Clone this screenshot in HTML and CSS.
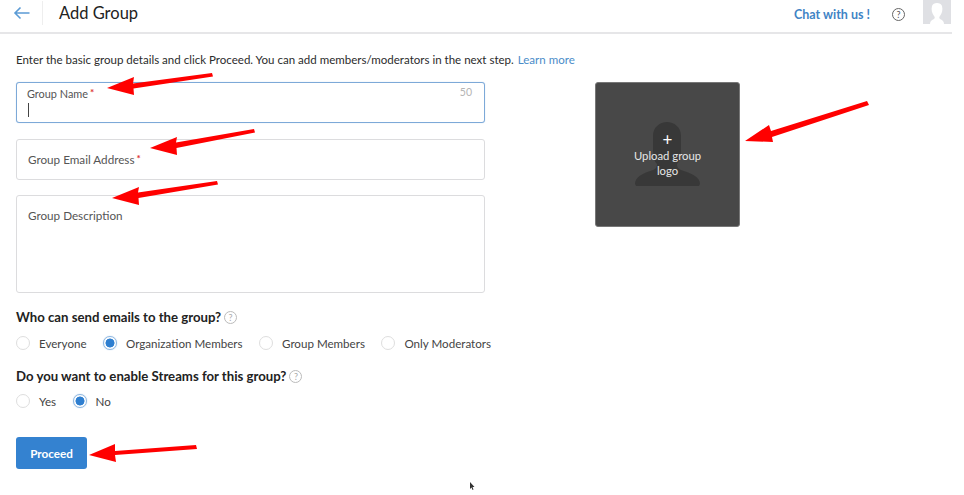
FILE: index.html
```html
<!DOCTYPE html>
<html lang="en">
<head>
<meta charset="utf-8">
<title>Add Group</title>
<link rel="stylesheet" href="styles.css">
</head>
<body>
<div class="page">
  <header class="topbar">
    <svg class="back" width="18" height="14" viewBox="0 0 18 14"><path d="M16.500 7H2M7.500 1.500 2 7l5.500 5.500" fill="none" stroke="#5b9bd5" stroke-width="1.600"/></svg>
    <span class="divider"></span>
    <h1 class="title">Add Group</h1>
    <a class="chat">Chat with us !</a>
    <span class="help-top">?</span>
    <svg class="avatar" width="28" height="24" viewBox="0 0 28 24"><rect width="28" height="24" fill="#dfe0e4"/><path d="M7 24c0-3 2-4 4-5 1-1 1-2 0-3-2-3-3-6-2-10 1-4 9-4 10 0 1 4 0 7-2 10-1 1-1 2 0 3 2 1 4 2 4 5z" fill="#fff"/></svg>
  </header>
  <p class="intro">Enter the basic group details and click Proceed. You can add members/moderators in the next step. <a class="learn">Learn more</a></p>
  <div class="content">
    <form class="form">
      <div class="field field-name focused">
        <label class="label">Group Name<span class="req">*</span></label>
        <span class="count">50</span>
        <span class="caret"></span>
      </div>
      <div class="field field-email">
        <label class="label">Group Email Address<span class="req">*</span></label>
      </div>
      <div class="field field-desc">
        <label class="label">Group Description</label>
      </div>
      <h2 class="question q1">Who can send emails to the group?<span class="qmark">?</span></h2>
      <div class="radios r1">
        <span class="radio"><i class="dot"></i>Everyone</span>
        <span class="radio"><i class="dot on"></i>Organization Members</span>
        <span class="radio"><i class="dot"></i>Group Members</span>
        <span class="radio"><i class="dot"></i>Only Moderators</span>
      </div>
      <h2 class="question q2">Do you want to enable Streams for this group?<span class="qmark">?</span></h2>
      <div class="radios r2">
        <span class="radio"><i class="dot"></i>Yes</span>
        <span class="radio"><i class="dot on"></i>No</span>
      </div>
      <button class="proceed" type="button">Proceed</button>
    </form>
    <div class="logo-box">
      <svg class="silhouette" width="66" height="66" viewBox="0 0 66 66"><path d="M0 62c0-7 8-11 18-14 3-1 4-3 4-6-3-3-4-8-4-14V14C18 5 25 0 32 0s14 5 14 14v14c0 6-1 11-4 14 0 3 1 5 4 6 10 3 19 7 19 14l-1 2H1z" fill="#383838"/></svg>
      <div class="upload">
        <span class="plus">+</span>
        <span>Upload group logo</span>
      </div>
    </div>
  </div>
  <svg class="arrows" width="964" height="495" viewBox="0 0 964 495">
    <g fill="#f00">
      <path d="M107 88 134 77 133 83.500 212 73 213 76.500 133.500 88.500 134 95z"/>
      <path d="M150 148 177 137 176 142.500 254 129 255 132.500 176.500 148 177 155z"/>
      <path d="M112 198 139 187 138 192.500 217 181 218 184.500 138.500 198 139 205z"/>
      <path d="M745 141 769 125 771 131 867 101 869 105 772 137 773 142z"/>
      <path d="M89 455 115 444 115 451 196 445 197 449 115 455 116 462z"/>
    </g>
    <path d="M470 482v7l1.500-1.500 1 2.500 1-.5-1-2.500h2z" fill="#333"/>
  </svg>
</div>
</body>
</html>
```
FILE: styles.css
```css
* { box-sizing: border-box; }
html, body { margin: 0; padding: 0; background: #fff; }
body { font-family: Lato, "Open Sans", sans-serif; color: #333; }
.page { position: relative; width: 964px; height: 495px; overflow: hidden; }

.topbar { display: flex; align-items: center; width: 952px; height: 34px; border-bottom: 2px solid #e6e6e8; padding: 0 0 6px 13px; }
.back { margin-right: 11px; }
.divider { width: 1px; height: 24px; background: #eee; margin-right: 16px; }
.title { margin: 0; font-size: 16.500px; font-weight: 400; color: #222; flex: 1; }
.chat { font-size: 12.500px; font-weight: 700; color: #3f84c5; margin-right: 22px; position: relative; top: 1px; }
.help-top { width: 13px; height: 13px; border: 1px solid #666; border-radius: 50%; font-size: 9px; line-height: 11px; text-align: center; color: #555; margin-right: 18px; position: relative; top: 1px; }
.avatar { align-self: flex-start; margin-right: 1px; }

.intro { margin: 0; padding: 18px 0 0 16px; font-size: 11.540px; line-height: 15px; height: 48px; color: #2b2b2b; white-space: nowrap; }
.learn { color: #4a8cc9; margin-left: 1px; }

.content { display: flex; gap: 110px; align-items: flex-start; padding-left: 16px; }
.form { width: 469px; flex: none; }

.field { position: relative; border: 1px solid #dcdcde; border-radius: 3px; background: #fff; }
.field-name { height: 41px; margin-bottom: 16px; }
.field-email { height: 41px; margin-bottom: 15px; }
.field-desc { height: 98px; margin-bottom: 15px; }
.focused { border-color: #7da9d8; box-shadow: 0 0 1px #a8c8ea; }
.label { position: absolute; left: 11px; font-size: 11.700px; line-height: 14px; color: #555; white-space: nowrap; }
.field-name .label { left: 10px; top: 2px; font-size: 10.900px; }
.field-email .label { top: 11px; }
.field-desc .label { top: 12px; }
.req { color: #d33; margin-left: 2px; font-size: 10px; font-weight: 700; vertical-align: 2px; }
.count { position: absolute; right: 12px; top: 2px; font-size: 10.500px; line-height: 14px; color: #b5b5b5; }
.caret { position: absolute; left: 11px; top: 20px; width: 1px; height: 14px; background: #444; }

.question { display: flex; align-items: center; margin: 0; font-size: 13.200px; font-weight: 700; line-height: 18px; color: #222; white-space: nowrap; }
.qmark { width: 13px; height: 13px; margin-left: 3px; border: 1px solid #bbb; border-radius: 50%; font-size: 9px; font-weight: 400; line-height: 11px; text-align: center; color: #aaa; }
.q1 { margin-bottom: 8px; }
.q2 { margin-bottom: 7px; }

.radios { display: flex; height: 18px; margin-bottom: 15px; font-size: 11.600px; color: #444; }
.r1 { gap: 16.500px; }
.r2 { gap: 16.500px; margin-bottom: 27px; }
.radio { display: flex; align-items: center; white-space: nowrap; }
.dot { width: 14px; height: 14px; margin-right: 9px; border: 1px solid #dedede; border-radius: 50%; background: #fff; }
.dot.on { border-color: #8db6e0; background: radial-gradient(circle, #2f7fd0 0 4.200px, #fff 4.800px); box-shadow: 0 0 1px #8db6e0; }

.proceed { display: block; width: 71px; height: 32px; padding: 0; border: 0; border-radius: 3px; background: #3482d0; color: #fff; font-family: inherit; font-size: 11.700px; font-weight: 700; }

.logo-box { position: relative; display: flex; align-items: center; justify-content: center; width: 145px; height: 145px; border-radius: 3px; background: #484848; border: 1px solid #777; }
.silhouette { position: absolute; left: 39px; top: 39px; }
.upload { position: relative; display: flex; flex-direction: column; align-items: center; width: 90px; font-size: 11.300px; line-height: 14.500px; text-align: center; color: #e6e6e6; }
.plus { font-size: 17px; line-height: 18px; color: #fff; }

.arrows { position: absolute; left: 0; top: 0; pointer-events: none; }
```
